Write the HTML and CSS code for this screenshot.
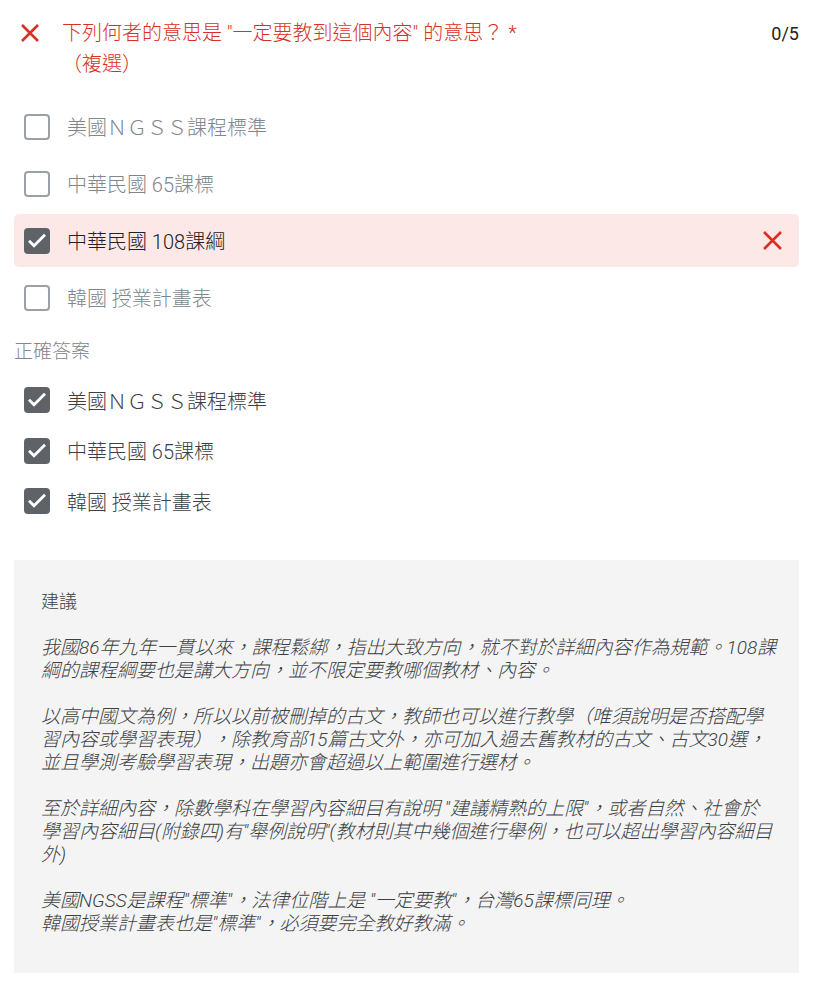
FILE: index.html
```html
<!DOCTYPE html>
<html lang="zh-TW">
<head>
    <meta charset="UTF-8">
    <title>測驗結果</title>
    <link rel="stylesheet" href="styles.css">
</head>
<body>
    <div class="question">
        <div class="q-head">
            <svg class="q-mark" width="18" height="18" viewBox="0 0 18 18">
                <path d="M1 1 L17 17 M17 1 L1 17" stroke="#d93025" stroke-width="2.6" fill="none"/>
            </svg>
            <div class="q-title">下列何者的意思是 "一定要教到這個內容" 的意思？ <span class="req">*</span><br>（複選）</div>
            <div class="score">0/5</div>
        </div>

        <div class="options">
            <div class="option">
                <span class="box"></span>
                <span class="label">美國ＮＧＳＳ課程標準</span>
            </div>
            <div class="option">
                <span class="box"></span>
                <span class="label">中華民國 65課標</span>
            </div>
            <div class="option wrong">
                <span class="box checked">
                    <svg width="26" height="26" viewBox="0 0 26 26"><polyline points="5,12.8 10,17.8 21,6.8" stroke="#fff" stroke-width="2.8" fill="none"/></svg>
                </span>
                <span class="label">中華民國 108課綱</span>
                <svg class="row-mark" width="19" height="19" viewBox="0 0 19 19">
                    <path d="M1 1 L18 18 M18 1 L1 18" stroke="#d93025" stroke-width="2.6" fill="none"/>
                </svg>
            </div>
            <div class="option">
                <span class="box"></span>
                <span class="label">韓國 授業計畫表</span>
            </div>
        </div>

        <div class="correct-title">正確答案</div>

        <div class="answers">
            <div class="option">
                <span class="box checked">
                    <svg width="26" height="26" viewBox="0 0 26 26"><polyline points="5,12.8 10,17.8 21,6.8" stroke="#fff" stroke-width="2.8" fill="none"/></svg>
                </span>
                <span class="label">美國ＮＧＳＳ課程標準</span>
            </div>
            <div class="option">
                <span class="box checked">
                    <svg width="26" height="26" viewBox="0 0 26 26"><polyline points="5,12.8 10,17.8 21,6.8" stroke="#fff" stroke-width="2.8" fill="none"/></svg>
                </span>
                <span class="label">中華民國 65課標</span>
            </div>
            <div class="option">
                <span class="box checked">
                    <svg width="26" height="26" viewBox="0 0 26 26"><polyline points="5,12.8 10,17.8 21,6.8" stroke="#fff" stroke-width="2.8" fill="none"/></svg>
                </span>
                <span class="label">韓國 授業計畫表</span>
            </div>
        </div>

        <div class="feedback">
            <div class="fb-title">建議</div>
            <p>我國86年九年一貫以來，課程鬆綁，指出大致方向，就不對於詳細內容作為規範。108課綱的課程綱要也是講大方向，並不限定要教哪個教材、內容。</p>
            <p>以高中國文為例，所以以前被刪掉的古文，教師也可以進行教學（唯須說明是否搭配學習內容或學習表現），除教育部15篇古文外，亦可加入過去舊教材的古文、古文30選，並且學測考驗學習表現，出題亦會超過以上範圍進行選材。</p>
            <p>至於詳細內容，除數學科在學習內容細目有說明 "建議精熟的上限"，或者自然、社會於學習內容細目(附錄四)有"舉例說明"(教材則其中幾個進行舉例，也可以超出學習內容細目外)</p>
            <p>美國NGSS是課程"標準"，法律位階上是 "一定要教"，台灣65課標同理。<br>韓國授業計畫表也是"標準"，必須要完全教好教滿。</p>
        </div>
    </div>
</body>
</html>
```

FILE: styles.css
```css
body {
    margin: 0;
    background: #fff;
    font-family: Roboto, "Noto Sans CJK TC", sans-serif;
    color: #202124;
}

.question {
    padding: 18px 15px 0 14px;
}

.q-head {
    display: flex;
    align-items: flex-start;
}

.q-mark {
    margin: 6px 0 0 7px;
    flex-shrink: 0;
}

.q-title {
    margin-left: 23px;
    flex: 1;
    font-size: 20px;
    line-height: 31px;
    font-weight: 300;
    color: #d93025;
}

.score {
    font-size: 18px;
    line-height: 31px;
    color: #202124;
}

.options {
    margin-top: 20px;
    display: flex;
    flex-direction: column;
    gap: 4px;
}

.option {
    display: flex;
    align-items: center;
    height: 53px;
    padding: 0 17px 0 10px;
    border-radius: 5px;
}

.option.wrong {
    background-color: #fce8e6;
}

.box {
    width: 26px;
    height: 26px;
    box-sizing: border-box;
    border: 2.5px solid #9aa0a6;
    border-radius: 4px;
    flex-shrink: 0;
}

.box.checked {
    border: none;
    background-color: #5f6368;
}

.box svg {
    display: block;
}

.label {
    margin-left: 17px;
    flex: 1;
    font-size: 20px;
    font-weight: 300;
    color: #80868b;
}

.wrong .label {
    color: #202124;
}

.row-mark {
    flex-shrink: 0;
}

.correct-title {
    margin-top: 15px;
    font-size: 19px;
    line-height: 26px;
    font-weight: 300;
    color: #80868b;
}

.answers {
    margin-top: 10px;
    display: flex;
    flex-direction: column;
}

.answers .option {
    height: 50.5px;
}

.answers .label {
    color: #3c4043;
}

.feedback {
    margin-top: 33px;
    padding: 30px 22px 38px 27px;
    background-color: #f4f4f4;
    font-size: 19px;
    line-height: 23px;
    font-weight: 300;
    color: #3c4043;
    text-spacing-trim: space-all;
}

.fb-title {
    font-size: 18px;
    margin-bottom: 23px;
}

.feedback p {
    margin: 0 0 23px;
    font-style: italic;
}

.feedback p:last-child {
    margin-bottom: 0;
}
```
